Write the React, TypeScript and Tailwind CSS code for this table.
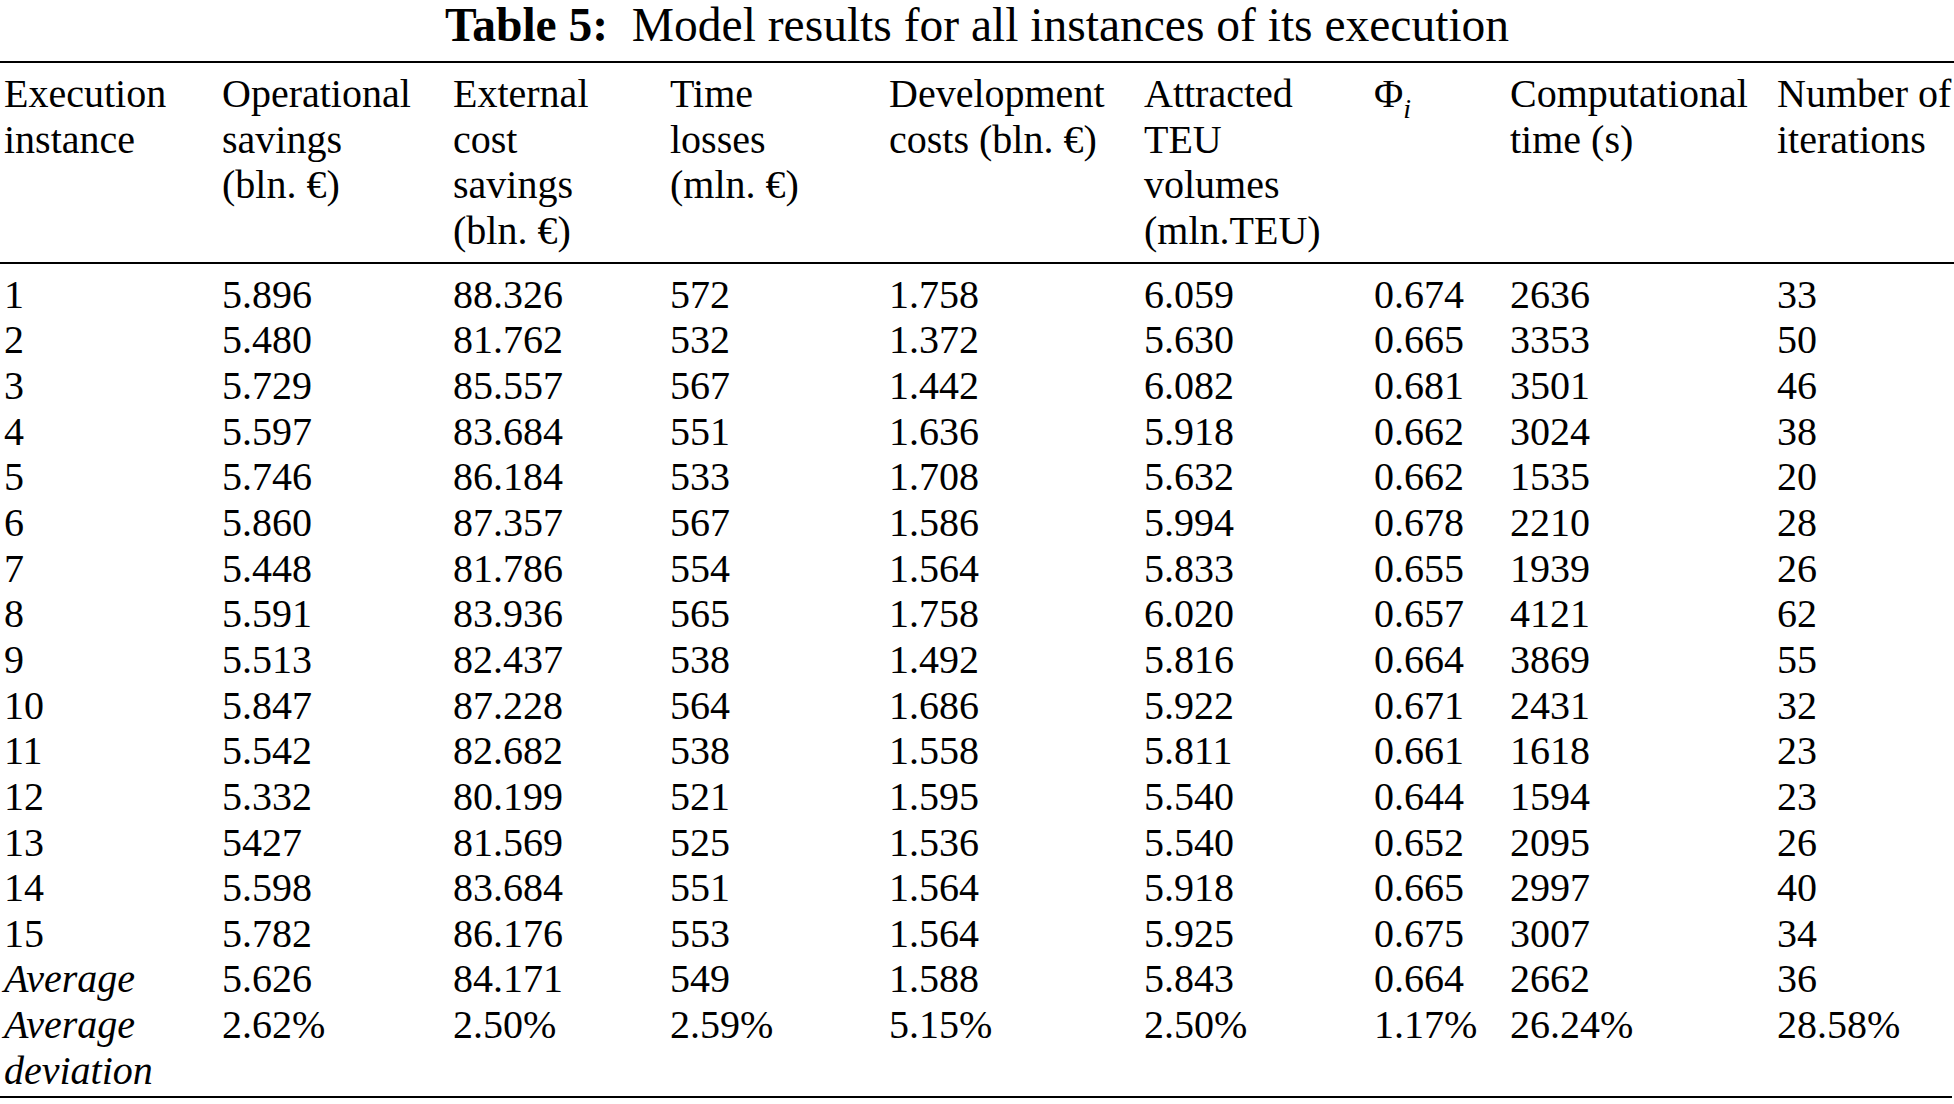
const headers: string[][] = [
  ['Execution', 'instance'],
  ['Operational', 'savings', '(bln. €)'],
  ['External', 'cost', 'savings', '(bln. €)'],
  ['Time', 'losses', '(mln. €)'],
  ['Development', 'costs (bln. €)'],
  ['Attracted', 'TEU', 'volumes', '(mln.TEU)'],
  [],
  ['Computational', 'time (s)'],
  ['Number of', 'iterations'],
];

const rows: string[][] = [
  ['1', '5.896', '88.326', '572', '1.758', '6.059', '0.674', '2636', '33'],
  ['2', '5.480', '81.762', '532', '1.372', '5.630', '0.665', '3353', '50'],
  ['3', '5.729', '85.557', '567', '1.442', '6.082', '0.681', '3501', '46'],
  ['4', '5.597', '83.684', '551', '1.636', '5.918', '0.662', '3024', '38'],
  ['5', '5.746', '86.184', '533', '1.708', '5.632', '0.662', '1535', '20'],
  ['6', '5.860', '87.357', '567', '1.586', '5.994', '0.678', '2210', '28'],
  ['7', '5.448', '81.786', '554', '1.564', '5.833', '0.655', '1939', '26'],
  ['8', '5.591', '83.936', '565', '1.758', '6.020', '0.657', '4121', '62'],
  ['9', '5.513', '82.437', '538', '1.492', '5.816', '0.664', '3869', '55'],
  ['10', '5.847', '87.228', '564', '1.686', '5.922', '0.671', '2431', '32'],
  ['11', '5.542', '82.682', '538', '1.558', '5.811', '0.661', '1618', '23'],
  ['12', '5.332', '80.199', '521', '1.595', '5.540', '0.644', '1594', '23'],
  ['13', '5427', '81.569', '525', '1.536', '5.540', '0.652', '2095', '26'],
  ['14', '5.598', '83.684', '551', '1.564', '5.918', '0.665', '2997', '40'],
  ['15', '5.782', '86.176', '553', '1.564', '5.925', '0.675', '3007', '34'],
];

const average = ['5.626', '84.171', '549', '1.588', '5.843', '0.664', '2662', '36'];
const deviation = ['2.62%', '2.50%', '2.59%', '5.15%', '2.50%', '1.17%', '26.24%', '28.58%'];

const grid =
  'grid grid-cols-[218px_231px_217px_219px_255px_230px_136px_267px_1fr] pl-[4px]';

export default function App() {
  return (
    <div className="w-[1954px] h-[1104px] bg-white text-black overflow-hidden font-['Liberation_Serif',_'Times_New_Roman',_serif]">
      {/* caption */}
      <div className="h-[61px] text-center text-[47.5px] leading-[50px]">
        <span className="font-bold">Table 5:</span>
        <span>&nbsp; Model results for all instances of its execution</span>
      </div>

      <div className="h-[2px] bg-black" />

      <div className="text-[40px] leading-[45.65px]">
        {/* header */}
        <div className={`${grid} pt-[8px] pb-[8px]`}>
          {headers.map((lines, i) => (
            <div key={i} className="whitespace-nowrap">
              {i === 6 ? (
                <div>
                  Φ<sub className="italic text-[28px] align-[-4px]">i</sub>
                </div>
              ) : (
                lines.map((l) => <div key={l}>{l}</div>)
              )}
            </div>
          ))}
        </div>

        <div className="h-[2px] bg-black" />

        {/* body */}
        <div className="pt-[8px]">
          {rows.map((r) => (
            <div key={r[0]} className={grid}>
              {r.map((c, j) => (
                <div key={j} className="whitespace-nowrap">
                  {c}
                </div>
              ))}
            </div>
          ))}
          <div className={grid}>
            <div className="italic">Average</div>
            {average.map((c, j) => (
              <div key={j}>{c}</div>
            ))}
          </div>
          <div className={grid}>
            <div className="italic">
              <div>Average</div>
              <div>deviation</div>
            </div>
            {deviation.map((c, j) => (
              <div key={j}>{c}</div>
            ))}
          </div>
        </div>

        <div className="h-[2px] bg-black mt-[3px] mr-[2px]" />
      </div>
    </div>
  );
}
